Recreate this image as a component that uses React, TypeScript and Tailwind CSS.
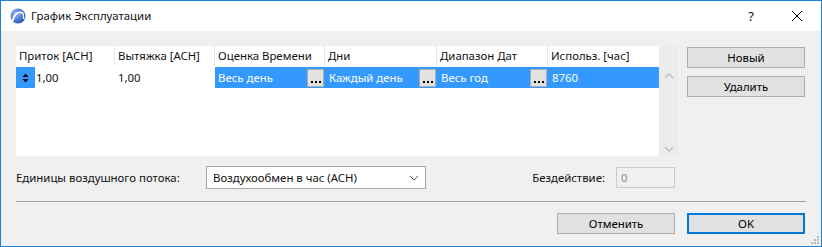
import React from "react";

const font = { fontFamily: '"Noto Sans", "Open Sans", sans-serif' };

function Dots() {
  return (
    <div className="w-[17px] h-[18px] bg-[#e1e1e1] border border-[#adadad] flex items-end justify-center pb-[3px] shrink-0">
      <div className="flex gap-[2px]">
        <div className="w-[2px] h-[2px] bg-black" />
        <div className="w-[2px] h-[2px] bg-black" />
        <div className="w-[2px] h-[2px] bg-black" />
      </div>
    </div>
  );
}

function Btn({ label, primary }: { label: string; primary?: boolean }) {
  return (
    <div
      className={
        "w-[118px] h-[21px] bg-[#e1e1e1] flex items-center justify-center text-black " +
        (primary ? "border-2 border-[#0078d7]" : "border border-[#adadad]")
      }
    >
      {label}
    </div>
  );
}

export default function App() {
  const headers = [
    ["Приток [ACH]", 99],
    ["Вытяжка [ACH]", 100],
    ["Оценка Времени", 110],
    ["Дни", 112],
    ["Диапазон Дат", 111],
    ["Использ. [час]", 111],
  ] as const;
  return (
    <div
      className="relative w-[822px] h-[247px] border border-[#1883d7] bg-[#f0f0f0] flex flex-col overflow-hidden text-[11.4px] leading-none text-[#111]"
      style={font}
    >
      {/* Title bar */}
      <div className="h-[30px] bg-white flex items-center shrink-0">
        <svg width="16" height="16" viewBox="0 0 16 16" className="ml-[9px] mr-[5px]">
          <defs>
            <radialGradient id="lg" cx="0.35" cy="0.35" r="0.8">
              <stop offset="0" stopColor="#8fbaf5" />
              <stop offset="1" stopColor="#1a4cb0" />
            </radialGradient>
          </defs>
          <circle cx="8" cy="8" r="7.5" fill="url(#lg)" />
          <path d="M2.5 13 C3.5 7 7.5 3 13 4.8" stroke="white" strokeWidth="1.8" fill="none" />
          <path d="M13 4.8 L13.8 11" stroke="white" strokeWidth="1.3" fill="none" />
        </svg>
        <span>График Эксплуатации</span>
        <div className="flex-1" />
        <span className="text-[13px] mr-[37px]">?</span>
        <svg width="12" height="12" viewBox="0 0 12 12" className="mr-[18px]">
          <path d="M1 1 L11 11 M11 1 L1 11" stroke="black" strokeWidth="1" />
        </svg>
      </div>

      {/* Body */}
      <div className="flex flex-col pl-[15px] pr-[15px] pt-[15px]">
        <div className="flex">
          {/* Table */}
          <div className="w-[643px] h-[110px] bg-white flex flex-col">
            <div className="h-[20px] flex">
              {headers.map(([h, w], i) => (
                <div
                  key={i}
                  className={"h-full flex items-center pl-[3px] " + (i < 5 ? "border-r border-[#e5e5e5]" : "")}
                  style={{ width: w }}
                >
                  {h}
                </div>
              ))}
            </div>
            <div className="h-[21px] mt-[1px] flex bg-[#3399ff]">
              <div className="w-[19px] h-full flex items-center justify-center">
                <svg width="7" height="10" viewBox="0 0 7 10">
                  <path d="M3.5 0.5 L6.5 4 L0.5 4 Z M0.5 6 L6.5 6 L3.5 9.5 Z" fill="black" />
                </svg>
              </div>
              <div className="w-[80px] h-full bg-white flex items-center pl-[1px]">1,00</div>
              <div className="w-[100px] h-full bg-white flex items-center pl-[3px]">1,00</div>
              <div className="w-[110px] h-full flex items-center justify-between pl-[3px] pr-[1px] text-white">
                <span>Весь день</span>
                <Dots />
              </div>
              <div className="w-[112px] h-full flex items-center justify-between pl-[4px] pr-[1px] text-white">
                <span>Каждый день</span>
                <Dots />
              </div>
              <div className="w-[111px] h-full flex items-center justify-between pl-[4px] pr-[1px] text-white">
                <span>Весь год</span>
                <Dots />
              </div>
              <div className="w-[111px] h-full flex items-center pl-[4px] text-white">8760</div>
            </div>
          </div>
          {/* Scrollbar */}
          <div className="w-[19px] h-[110px] bg-[#ececec] flex flex-col items-center justify-between pt-[27px] pb-[4px]">
            <svg width="10" height="6" viewBox="0 0 10 6">
              <path d="M1 5 L5 1 L9 5" stroke="#c2c2c2" strokeWidth="1.6" fill="none" />
            </svg>
            <svg width="10" height="6" viewBox="0 0 10 6">
              <path d="M1 1 L5 5 L9 1" stroke="#c2c2c2" strokeWidth="1.6" fill="none" />
            </svg>
          </div>
          {/* Side buttons */}
          <div className="ml-[9px] pt-[1px] flex flex-col gap-[8px]">
            <Btn label="Новый" />
            <Btn label="Удалить" />
          </div>
        </div>

        {/* Units row */}
        <div className="flex items-center mt-[10px] h-[23px]">
          <span className="w-[190px]">Единицы воздушного потока:</span>
          <div className="w-[220px] h-[23px] bg-white border border-[#a5a5a5] flex items-center justify-between pl-[6px] pr-[6px]">
            <span>Воздухообмен в час (ACH)</span>
            <svg width="10" height="6" viewBox="0 0 10 6">
              <path d="M1 1 L5 5 L9 1" stroke="#555" strokeWidth="1" fill="none" />
            </svg>
          </div>
          <div className="flex-1" />
          <span className="mr-[11px]">Бездействие:</span>
          <div className="w-[59px] h-[21px] border border-[#cccccc] bg-[#f0f0f0] flex items-center pl-[4px] text-[#8a8a8a] mr-[131px]">
            0
          </div>
        </div>

        {/* Separator */}
        <div className="mt-[12px] h-[1px] bg-[#a0a0a0] w-[790px]" />

        {/* Bottom buttons */}
        <div className="flex justify-end gap-[12px] mt-[11px] pr-[1px]">
          <Btn label="Отменить" />
          <Btn label="OK" primary />
        </div>
      </div>

      {/* Resize grip */}
      <svg width="8" height="8" viewBox="0 0 8 8" className="absolute right-[2px] bottom-[2px]">
        <rect x="6" y="0" width="2" height="2" fill="#b8b8b8" />
        <rect x="3" y="3" width="2" height="2" fill="#b8b8b8" />
        <rect x="6" y="3" width="2" height="2" fill="#b8b8b8" />
        <rect x="0" y="6" width="2" height="2" fill="#b8b8b8" />
        <rect x="3" y="6" width="2" height="2" fill="#b8b8b8" />
        <rect x="6" y="6" width="2" height="2" fill="#b8b8b8" />
      </svg>
    </div>
  );
}
